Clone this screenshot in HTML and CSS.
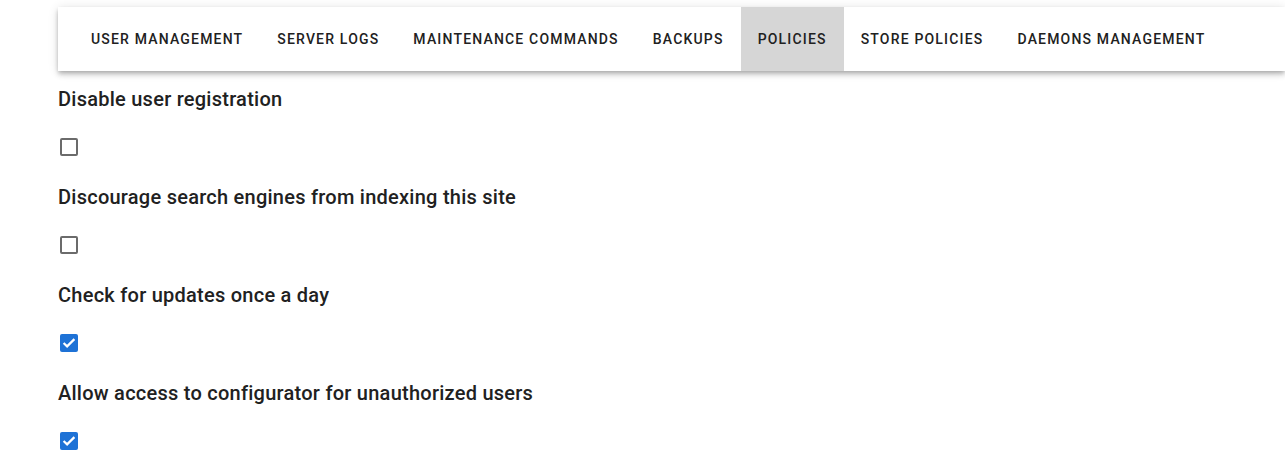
FILE: index.html
```html
<!DOCTYPE html>
<html>
<head>
<meta charset="utf-8">
<link rel="stylesheet" href="styles.css">
</head>
<body>
<div class="page">
  <nav class="tabs">
    <div class="tab">User management</div>
    <div class="tab">Server logs</div>
    <div class="tab">Maintenance commands</div>
    <div class="tab">Backups</div>
    <div class="tab active">Policies</div>
    <div class="tab">Store policies</div>
    <div class="tab">Daemons management</div>
  </nav>
  <div class="settings">
    <div class="setting">
      <div class="label">Disable user registration</div>
      <span class="box"></span>
    </div>
    <div class="setting">
      <div class="label">Discourage search engines from indexing this site</div>
      <span class="box"></span>
    </div>
    <div class="setting">
      <div class="label">Check for updates once a day</div>
      <span class="box checked"><svg viewBox="0 0 18 18" width="18" height="18"><path d="M3.6 9 L7.1 12.4 L14.4 5.1" fill="none" stroke="#fff" stroke-width="2.2"/></svg></span>
    </div>
    <div class="setting">
      <div class="label">Allow access to configurator for unauthorized users</div>
      <span class="box checked"><svg viewBox="0 0 18 18" width="18" height="18"><path d="M3.6 9 L7.1 12.4 L14.4 5.1" fill="none" stroke="#fff" stroke-width="2.2"/></svg></span>
    </div>
  </div>
</div>
</body>
</html>
```

FILE: styles.css
```css
html, body {
  margin: 0;
  padding: 0;
  background: #fff;
  overflow: hidden;
}
body {
  font-family: Roboto, "Liberation Sans", sans-serif;
  color: #212121;
}
.page {
  padding: 7px 0 0 58px;
}
.tabs {
  display: flex;
  height: 64px;
  padding-left: 16px;
  background: #fff;
  box-shadow: 0 2px 4px -1px rgba(0,0,0,.2), 0 4px 5px 0 rgba(0,0,0,.14), 0 1px 10px 0 rgba(0,0,0,.12);
}
.tab {
  display: flex;
  align-items: center;
  padding: 0 17px;
  font-size: 14px;
  font-weight: 500;
  letter-spacing: 1.18px;
  text-transform: uppercase;
  color: #212121;
}
.tab.active {
  background: #d6d6d6;
}
.settings {
  display: flex;
  flex-direction: column;
  gap: 28px;
  margin-top: 15px;
}
.setting {
  display: flex;
  flex-direction: column;
  align-items: flex-start;
  gap: 25px;
}
.label {
  font-size: 20px;
  font-weight: 500;
  line-height: 27px;
  letter-spacing: 0.25px;
  color: #212121;
}
.box {
  display: block;
  box-sizing: border-box;
  width: 18px;
  height: 18px;
  margin-left: 2px;
  border: 2px solid #6b6b6b;
  border-radius: 2px;
}
.box.checked {
  border: none;
  background: #1e72d6;
}
.box svg {
  display: block;
}
```
